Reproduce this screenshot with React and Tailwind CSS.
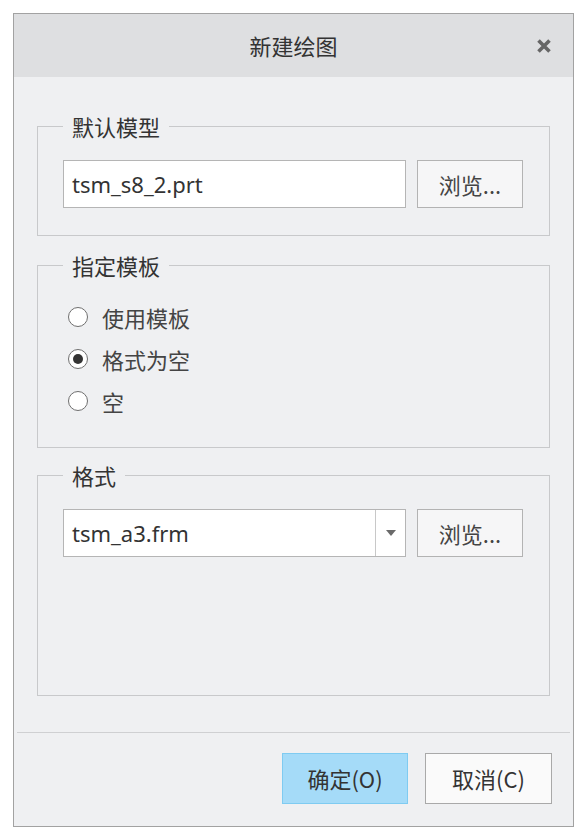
import React from "react";

const CJK = { fontFamily: '"Noto Sans CJK SC", "Noto Sans", sans-serif' };
const LAT = { fontFamily: '"Noto Sans", "Noto Sans CJK SC", sans-serif' };

function Radio({ checked, label }) {
  return (
    <div className="h-[42px] flex items-center">
      <span className="ml-[5px] w-[20px] h-[20px] rounded-full border-[1.5px] border-[#6f6f6f] bg-white flex items-center justify-center">
        {checked && <span className="w-[10px] h-[10px] rounded-full bg-[#333]" />}
      </span>
      <span className="ml-[14px] text-[22px] text-[#444] leading-none" style={CJK}>
        {label}
      </span>
    </div>
  );
}

function Group({ title, className, children }) {
  return (
    <fieldset className={"border border-[#c8c9cb] px-[25px] " + className}>
      <legend className="px-[9px] text-[22px] leading-[28px] text-[#333]" style={CJK}>
        {title}
      </legend>
      {children}
    </fieldset>
  );
}

function BrowseBtn() {
  return (
    <div
      className="w-[106px] h-[48px] border border-[#b3b3b3] bg-[#f6f6f7] flex items-center justify-center text-[22px] text-[#444]"
      style={CJK}
    >
      浏览...
    </div>
  );
}

export default function App() {
  return (
    <div className="min-h-screen bg-white pl-[13px] pt-[13px]">
      <div className="w-[561px] h-[814px] border border-[#a2a2a2] bg-[#eff0f2] flex flex-col">
        <div className="h-[63px] bg-[#dedfe1] grid grid-cols-[1fr_auto_1fr] items-center">
          <div />
          <div className="text-[22px] text-[#333]" style={CJK}>
            新建绘图
          </div>
          <div className="flex justify-end pr-[21px]">
            <svg width="16" height="16" viewBox="0 0 16 16">
              <path d="M2.5 2.5 L13.5 13.5 M13.5 2.5 L2.5 13.5" stroke="#666" strokeWidth="3.6" strokeLinecap="butt" />
            </svg>
          </div>
        </div>

        <div className="px-[23px] flex flex-col">
          <Group title="默认模型" className="mt-[35px] pt-[20px] pb-[27px]">
            <div className="flex gap-[11px]">
              <div
                className="w-[343px] h-[48px] border border-[#b5b5b5] bg-white flex items-center pl-[8px] text-[22px] text-[#333]"
                style={LAT}
              >
                tsm_s8_2.prt
              </div>
              <BrowseBtn />
            </div>
          </Group>

          <Group title="指定模板" className="mt-[15px] pt-[17px] pb-[25px]">
            <Radio label="使用模板" />
            <Radio label="格式为空" checked />
            <Radio label="空" />
          </Group>

          <Group title="格式" className="mt-[13px] pt-[20px] pb-[138px]">
            <div className="flex gap-[11px]">
              <div className="w-[343px] h-[48px] border border-[#b5b5b5] bg-white flex">
                <div className="flex-1 flex items-center pl-[8px] text-[22px] text-[#333]" style={LAT}>
                  tsm_a3.frm
                </div>
                <div className="w-[30px] border-l border-[#c8c8c8] flex items-center justify-center">
                  <svg width="10" height="6" viewBox="0 0 10 6">
                    <path d="M0 0 L10 0 L5 6 Z" fill="#6a6a6a" />
                  </svg>
                </div>
              </div>
              <BrowseBtn />
            </div>
          </Group>
        </div>

        <div className="flex-1" />

        <div className="mx-[3px] border-t border-[#cfd0d2]" />
        <div className="flex justify-end gap-[17px] pr-[21px] pt-[20px] pb-[22px]">
          <div
            className="w-[126px] h-[51px] border border-[#7fcbf1] bg-[#a5dbf8] flex items-center justify-center text-[22px] text-[#333]"
            style={CJK}
          >
            确定(O)
          </div>
          <div
            className="w-[127px] h-[51px] border border-[#a9a9a9] bg-[#fafafa] flex items-center justify-center text-[22px] text-[#333]"
            style={CJK}
          >
            取消(C)
          </div>
        </div>
      </div>
    </div>
  );
}
